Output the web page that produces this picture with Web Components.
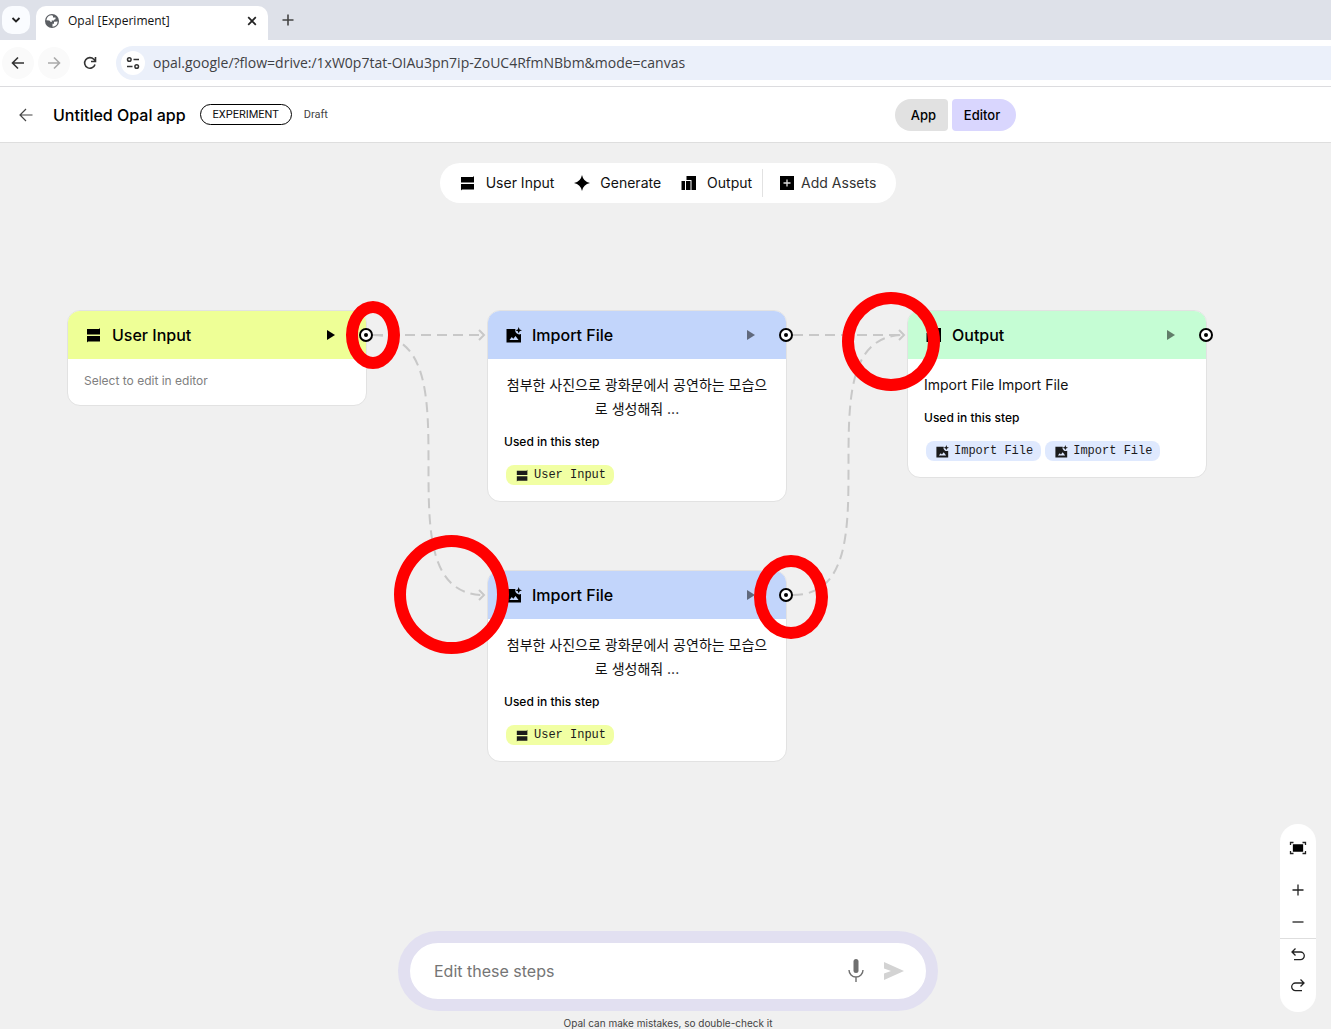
<!DOCTYPE html>
<html lang="ko">
<head>
<meta charset="utf-8">
<title>Opal [Experiment]</title>
<style>
  html, body {
    margin: 0;
    height: 100%;
    overflow: hidden;
    font-family: Inter, "Noto Sans CJK KR", sans-serif;
    color: #111;
  }

  body {
    display: flex;
    flex-direction: column;
    background: #fff;
  }
</style>
</head>
<body>
  <browser-tabs>Opal [Experiment]</browser-tabs>
  <address-bar url="opal.google/?flow=drive:/1xW0p7tat-OIAu3pn7ip-ZoUC4RfmNBbm&amp;mode=canvas"></address-bar>
  <app-header>Untitled Opal app</app-header>

  <flow-canvas>
    <flow-edges slot="board"></flow-edges>

    <flow-node slot="board" icon="input" heading="User Input" active style="left: 67px; top: 167px; --head: #eeff96">
      <p class="hint">Select to edit in editor</p>
    </flow-node>
    <flow-node slot="board" icon="image" heading="Import File" style="left: 487px; top: 167px; --head: #c2d5fb">
      <p class="korean">첨부한 사진으로 광화문에서 공연하는 모습으로 생성해줘 ...</p>
      <node-chip slot="used" icon="input" style="--chip: #f1ffa3">User Input</node-chip>
    </flow-node>
    <flow-node slot="board" icon="image" heading="Import File" style="left: 487px; top: 427px; --head: #c2d5fb">
      <p class="korean">첨부한 사진으로 광화문에서 공연하는 모습으로 생성해줘 ...</p>
      <node-chip slot="used" icon="input" style="--chip: #f1ffa3">User Input</node-chip>
    </flow-node>
    <flow-node slot="board" icon="output" heading="Output" style="left: 907px; top: 167px; --head: #c5fdd4">
      <p>Import File Import File</p>
      <node-chip slot="used" icon="image" style="--chip: #dfe9fe">Import File</node-chip>
      <node-chip slot="used" icon="image" style="--chip: #dfe9fe">Import File</node-chip>
    </flow-node>

    <ring-mark slot="board" style="left: 346px; top: 158px; width: 54px; height: 68px"></ring-mark>
    <ring-mark slot="board" style="left: 842px; top: 149px; width: 98px; height: 99px"></ring-mark>
    <ring-mark slot="board" style="left: 394px; top: 392px; width: 115px; height: 119px"></ring-mark>
    <ring-mark slot="board" style="left: 754px; top: 412px; width: 74px; height: 84px"></ring-mark>

    <step-palette slot="top"></step-palette>
    <zoom-controls slot="side"></zoom-controls>
    <prompt-box slot="bottom">Opal can make mistakes, so double-check it</prompt-box>
  </flow-canvas>

<script>
const ICONS = {
  input: '<path d="M1 2h12l1-1v6.500H1zM1 9h13v5.500H2L1 15.500z"/>',
  spark: '<path d="M8 0Q9.300 6.700 16 8 9.300 9.300 8 16 6.700 9.300 0 8 6.700 6.700 8 0z"/>',
  output: '<path d="M.5 6H4v9H.5zM5 6h4.500v9H5zM5.500 1H15v14h-4.500V5h-5z"/>',
  add: '<path d="M1 1h14v14H1z"/><path d="M8 4.500v7M4.500 8h7" stroke="#ddd" stroke-width="1.300"/>',
  image: '<path fill-rule="evenodd" d="M.5 2h9a4 4 0 0 0 5.500 5v8.500H.5zM3.500 13h9l-3-4-2.200 2.800-1.500-1.800z"/><path d="M12.700 0l.9 2.400 2.400.9-2.400.9-.9 2.400-.9-2.400-2.400-.9 2.400-.9z"/>',
};

function icon(name, size) {
  return `<svg viewBox="0 0 16 16" width="${size}" height="${size}" aria-hidden="true">${ICONS[name]}</svg>`;
}

// Shared by every component below
const RESET = `
  *, :host { box-sizing: border-box; }
  button, input { border: 0; padding: 0; margin: 0; background: none; font: inherit; color: inherit; outline: none; }
  button { display: flex; align-items: center; justify-content: center; }
  svg { display: block; flex: none; }
`;

class BrowserTabs extends HTMLElement {
  constructor() {
    super();
    this.attachShadow({ mode: "open" });
  }

  connectedCallback() {
    this.shadowRoot.innerHTML = `
      <style>
        ${RESET}
        :host {
          display: flex;
          flex: none;
          height: 40px;
          padding: 6px 2px 0;
          gap: 6px;
          background: #dee1e9;
          font: 12px/16px "Open Sans", "Noto Sans", sans-serif;
        }
        .menu { width: 28px; height: 28px; border-radius: 10px; background: #fafcff; }
        .tab {
          display: flex;
          align-items: center;
          width: 232px;
          padding: 0 11px 4px 9px;
          gap: 9px;
          border-radius: 10px 10px 0 0;
          background: #fff;
        }
        .tab span { flex: 1; }
        .new { width: 28px; height: 28px; }
      </style>
      <button class="menu" aria-label="Search tabs">
        <svg width="10" height="10" viewBox="0 0 10 10" fill="none" stroke="#222" stroke-width="1.800"><path d="M1.500 3L5 6.500 8.500 3"/></svg>
      </button>
      <div class="tab">
        <svg width="14" height="14" viewBox="0 0 14 14"><circle cx="7" cy="7" r="7" fill="#5b5e63"/><path d="M7 1.300a5.800 5.800 0 0 0-5.600 5L4 6.500c1 0 1.500.8 1.500 1.500h1.200V6.500H9c0-1 .8-1.300 1.500-1.300V3.500H8V2zM12.700 7.500L9 7.800v2H7.500v2.900a5.800 5.800 0 0 0 5.200-5.200z" fill="#fff"/></svg>
        <span><slot></slot></span>
        <button aria-label="Close tab"><svg width="10" height="10" viewBox="0 0 10 10" stroke="#222" stroke-width="1.700"><path d="M1.200 1.200l7.600 7.600M8.800 1.200L1.200 8.800"/></svg></button>
      </div>
      <button class="new" aria-label="New tab">
        <svg width="12" height="12" viewBox="0 0 12 12" stroke="#444" stroke-width="1.600"><path d="M6 .5v11M.5 6h11"/></svg>
      </button>
    `;
  }
}

class AddressBar extends HTMLElement {
  constructor() {
    super();
    this.attachShadow({ mode: "open" });
  }

  connectedCallback() {
    this.shadowRoot.innerHTML = `
      <style>
        ${RESET}
        :host {
          display: flex;
          flex: none;
          align-items: center;
          height: 47px;
          padding-left: 2px;
          gap: 4px;
          border-bottom: 1px solid #dcdcdf;
          font: 14px/20px "Open Sans", "Noto Sans", sans-serif;
        }
        .nav { width: 32px; height: 32px; border-radius: 50%; }
        .soft { background: #fafafa; }
        .field {
          display: flex;
          align-items: center;
          flex: 1;
          height: 34px;
          margin-left: 6px;
          padding-left: 5px;
          gap: 8px;
          border-radius: 17px 0 0 17px;
          background: #ebf0fa;
        }
        .site { width: 24px; height: 24px; border-radius: 50%; background: #fff; }
        input { flex: 1; color: #3f4144; }
      </style>
      <button class="nav soft" aria-label="Back"><svg width="14" height="14" viewBox="0 0 14 14" fill="none" stroke="#333" stroke-width="1.600"><path d="M13 7H1.500M7 1.500L1.500 7 7 12.500"/></svg></button>
      <button class="nav soft" aria-label="Forward"><svg width="14" height="14" viewBox="0 0 14 14" fill="none" stroke="#aaa" stroke-width="1.600"><path d="M1 7h11.500M7 1.500L12.500 7 7 12.500"/></svg></button>
      <button class="nav" aria-label="Reload"><svg width="14" height="14" viewBox="0 0 14 14" fill="none" stroke="#333" stroke-width="1.600"><path d="M12 8.500A5.300 5.300 0 1 1 10.800 3.300L12.300 5M12.500 1v4.500H8"/></svg></button>
      <div class="field">
        <button class="site" aria-label="Site information"><svg width="14" height="14" viewBox="0 0 14 14" fill="none" stroke="#333" stroke-width="1.500"><circle cx="3.300" cy="3.500" r="1.800"/><path d="M7.500 3.500H13M1 10.500h5.500"/><circle cx="10.700" cy="10.500" r="1.800"/></svg></button>
        <input type="text" aria-label="Address" value="${this.getAttribute("url").replace(/&/g, "&amp;")}">
      </div>
    `;
  }
}

class AppHeader extends HTMLElement {
  constructor() {
    super();
    this.attachShadow({ mode: "open" });
  }

  connectedCallback() {
    this.shadowRoot.innerHTML = `
      <style>
        ${RESET}
        :host {
          display: grid;
          flex: none;
          grid-template-columns: 895fr 436fr;
          align-items: center;
          height: 56px;
          border-bottom: 1px solid #dedede;
          font-size: 11px;
        }
        .left, .modes { display: flex; align-items: center; }
        .left { padding-left: 19px; }
        h1 { margin: 0 14px 0 20px; font-size: 16px; line-height: 24px; font-weight: 500; color: #000; }
        .badge {
          height: 21px;
          padding: 0 12px;
          border: 1px solid #000;
          border-radius: 11px;
          line-height: 19px;
          font-family: Roboto, sans-serif;
        }
        .draft { margin-left: 12px; font-family: Roboto, sans-serif; color: #444; }
        .modes { gap: 4px; font-size: 13px; font-weight: 500; color: #000; }
        .modes button { height: 32px; }
        .app { width: 53px; padding-left: 4px; border-radius: 16px 4px 4px 16px; background: #e1e1e1; }
        .editor { width: 64px; padding-right: 4px; border-radius: 4px 16px 16px 4px; background: #d9d6fe; }
      </style>
      <div class="left">
        <button aria-label="Back"><svg width="14" height="14" viewBox="0 0 14 14" fill="none" stroke="#444" stroke-width="1.200"><path d="M13.500 7H1M7 1L1 7l6 6"/></svg></button>
        <h1><slot></slot></h1>
        <span class="badge">EXPERIMENT</span>
        <span class="draft">Draft</span>
      </div>
      <div class="modes">
        <button class="app">App</button>
        <button class="editor">Editor</button>
      </div>
    `;
  }
}

class FlowCanvas extends HTMLElement {
  constructor() {
    super();
    this.attachShadow({ mode: "open" });
  }

  connectedCallback() {
    this.shadowRoot.innerHTML = `
      <style>
        :host {
          display: flex;
          flex: 1;
          flex-direction: column;
          align-items: center;
          justify-content: space-between;
          position: relative;
          min-height: 0;
          padding: 20px 0 0 5px;
          box-sizing: border-box;
          overflow: hidden;
          background: #f0f0f0;
        }
        .side { position: absolute; right: 15px; bottom: 17px; }
      </style>
      <slot name="board"></slot>
      <slot name="top"></slot>
      <slot name="bottom"></slot>
      <div class="side"><slot name="side"></slot></div>
    `;
  }
}

class FlowEdges extends HTMLElement {
  constructor() {
    super();
    this.attachShadow({ mode: "open" });
  }

  connectedCallback() {
    this.shadowRoot.innerHTML = `
      <style>
        :host { position: absolute; inset: 0; pointer-events: none; }
        svg { display: block; width: 100%; height: 100%; fill: none; stroke: #c8c8c8; stroke-width: 2; }
        .line { stroke-dasharray: 10 6; }
      </style>
      <svg aria-hidden="true">
        <g class="line">
          <path d="M373 192H484"/>
          <path d="M373 192C484 192 373 452 484 452"/>
          <path d="M793 192H904"/>
          <path d="M793 452C904 452 793 192 904 192"/>
        </g>
        <path d="M479 187l5 5-5 5M479 447l5 5-5 5M899 187l5 5-5 5"/>
      </svg>
    `;
  }
}

class FlowNode extends HTMLElement {
  constructor() {
    super();
    this.attachShadow({ mode: "open" });
  }

  connectedCallback() {
    const used = this.querySelector("[slot=used]")
      ? '<h3>Used in this step</h3><div class="chips"><slot name="used"></slot></div>'
      : "";
    this.shadowRoot.innerHTML = `
      <style>
        ${RESET}
        :host {
          display: block;
          position: absolute;
          width: 300px;
          border: 1px solid #e2e2e2;
          border-radius: 13px;
          background: #fff;
        }
        header {
          display: flex;
          align-items: center;
          height: 48px;
          padding: 0 31px 0 18px;
          gap: 10px;
          border-radius: 12px 12px 0 0;
          background: var(--head);
          color: #000;
        }
        h2 { flex: 1; margin: 0; font-size: 16px; line-height: 24px; font-weight: 500; }
        .run { opacity: .5; }
        :host([active]) .run { opacity: 1; }
        .body { padding: 14px 16px 16px; }
        h3 { margin: 13px 0 15px; font-size: 12px; line-height: 16px; font-weight: 500; color: #000; }
        .chips { display: flex; gap: 4px; padding: 0 2px; }
        ::slotted(p) { margin: 0; font-size: 14px; line-height: 24px; }
        ::slotted(.korean) { text-align: center; }
        ::slotted(.hint) { font-size: 12px; line-height: 16px; color: #808080; }
        .port { position: absolute; top: 16px; right: -8px; width: 16px; height: 16px; }
      </style>
      <header>
        ${icon(this.getAttribute("icon"), 16)}
        <h2>${this.getAttribute("heading")}</h2>
        <button class="run" aria-label="Run step"><svg width="8" height="10" viewBox="0 0 8 10"><path d="M0 0l8 5-8 5z"/></svg></button>
      </header>
      <div class="body">
        <slot></slot>
        ${used}
      </div>
      <svg class="port" viewBox="0 0 16 16" aria-hidden="true"><circle cx="8" cy="8" r="6" fill="#fff" stroke="#000" stroke-width="2"/><circle cx="8" cy="8" r="2"/></svg>
    `;
  }
}

class NodeChip extends HTMLElement {
  constructor() {
    super();
    this.attachShadow({ mode: "open" });
  }

  connectedCallback() {
    this.shadowRoot.innerHTML = `
      <style>
        ${RESET}
        :host {
          display: flex;
          align-items: center;
          height: 20px;
          padding: 0 8px 0 10px;
          gap: 5px;
          border-radius: 8px;
          background: var(--chip);
          font: 12px/18px "Liberation Mono", monospace;
          color: #1b1b1b;
          fill: #1b1b1b;
        }
      </style>
      ${icon(this.getAttribute("icon"), 13)}
      <slot></slot>
    `;
  }
}

// Red ring drawn over the board to point at a connection
class RingMark extends HTMLElement {
  constructor() {
    super();
    this.attachShadow({ mode: "open" });
  }

  connectedCallback() {
    this.shadowRoot.innerHTML = `
      <style>
        :host {
          position: absolute;
          z-index: 1;
          box-sizing: border-box;
          border: 12px solid #f00;
          border-radius: 50%;
          pointer-events: none;
        }
      </style>
    `;
  }
}

class StepPalette extends HTMLElement {
  constructor() {
    super();
    this.attachShadow({ mode: "open" });
  }

  connectedCallback() {
    this.shadowRoot.innerHTML = `
      <style>
        ${RESET}
        :host {
          display: flex;
          align-items: center;
          height: 40px;
          padding: 0 20px;
          gap: 20px;
          border-radius: 20px;
          background: #fff;
          font-size: 14px;
          line-height: 20px;
        }
        button { gap: 10px; }
        .assets { height: 28px; margin-left: -10px; padding-left: 16px; gap: 6px; border-left: 1px solid #e2e2e2; color: #333; }
      </style>
      <button>${icon("input", 16)}User Input</button>
      <button>${icon("spark", 16)}Generate</button>
      <button>${icon("output", 16)}Output</button>
      <button class="assets">${icon("add", 16)}Add Assets</button>
    `;
  }
}

class ZoomControls extends HTMLElement {
  constructor() {
    super();
    this.attachShadow({ mode: "open" });
  }

  connectedCallback() {
    this.shadowRoot.innerHTML = `
      <style>
        ${RESET}
        :host {
          display: flex;
          flex-direction: column;
          width: 36px;
          padding: 8px 0 10px;
          border-radius: 18px;
          background: #fff;
        }
        button { height: 32px; }
        .fit { margin-bottom: 10px; }
        .undo { border-top: 1px solid #dedede; }
        svg { fill: none; stroke: #222; stroke-width: 1.3; }
      </style>
      <button class="fit" aria-label="Fit to screen"><svg width="18" height="14" viewBox="0 0 18 14"><path d="M4.500 4h9v6h-9z" fill="#000" stroke="#000"/><path d="M1.500 4V1.500h3M13.500 1.500h3V4M16.500 10v2.500h-3M4.500 12.500h-3V10"/></svg></button>
      <button aria-label="Zoom in"><svg width="12" height="12" viewBox="0 0 12 12"><path d="M6 .5v11M.5 6h11"/></svg></button>
      <button aria-label="Zoom out"><svg width="12" height="12" viewBox="0 0 12 12"><path d="M.5 6h11"/></svg></button>
      <button class="undo" aria-label="Undo"><svg width="14" height="14" viewBox="0 0 14 14"><path d="M4.500 .5L1 4l3.500 3.500M1 4h8.500a3.800 3.800 0 0 1 0 7.600H3"/></svg></button>
      <button aria-label="Redo"><svg width="14" height="14" viewBox="0 0 14 14"><path d="M9.500 .5L13 4 9.500 7.500M13 4H4.500a3.800 3.800 0 0 0 0 7.600H11"/></svg></button>
    `;
  }
}

class PromptBox extends HTMLElement {
  constructor() {
    super();
    this.attachShadow({ mode: "open" });
  }

  connectedCallback() {
    this.shadowRoot.innerHTML = `
      <style>
        ${RESET}
        :host {
          display: flex;
          flex-direction: column;
          gap: 6px;
          width: 540px;
          max-width: 100%;
          text-align: center;
        }
        form {
          display: flex;
          align-items: center;
          height: 80px;
          padding: 0 22px 0 24px;
          gap: 20px;
          border: 12px solid #e2e0f1;
          border-radius: 40px;
          background: #fff;
          font-size: 16px;
        }
        input { flex: 1; min-width: 0; line-height: 24px; }
        input::placeholder { color: #757575; opacity: 1; }
        p { margin: 0; font-size: 10px; line-height: 12px; color: #444; }
      </style>
      <form>
        <input type="text" placeholder="Edit these steps" aria-label="Edit these steps">
        <button type="button" aria-label="Speak"><svg width="16" height="24" viewBox="0 0 16 24"><rect x="5.500" y="0" width="5" height="14" rx="2.500" fill="#6f6f6f"/><path d="M1 11a7 7 0 0 0 14 0M8 18v5" fill="none" stroke="#6f6f6f" stroke-width="1.400"/></svg></button>
        <button type="button" aria-label="Send"><svg width="20" height="18" viewBox="0 0 20 18"><path d="M0 0l20 9-20 9v-6.500L7 9 0 6.500z" fill="#d3d3d3"/></svg></button>
      </form>
      <p><slot></slot></p>
    `;
  }
}

customElements.define("browser-tabs", BrowserTabs);
customElements.define("address-bar", AddressBar);
customElements.define("app-header", AppHeader);
customElements.define("flow-canvas", FlowCanvas);
customElements.define("flow-edges", FlowEdges);
customElements.define("flow-node", FlowNode);
customElements.define("node-chip", NodeChip);
customElements.define("ring-mark", RingMark);
customElements.define("step-palette", StepPalette);
customElements.define("zoom-controls", ZoomControls);
customElements.define("prompt-box", PromptBox);
</script>
</body>
</html>
